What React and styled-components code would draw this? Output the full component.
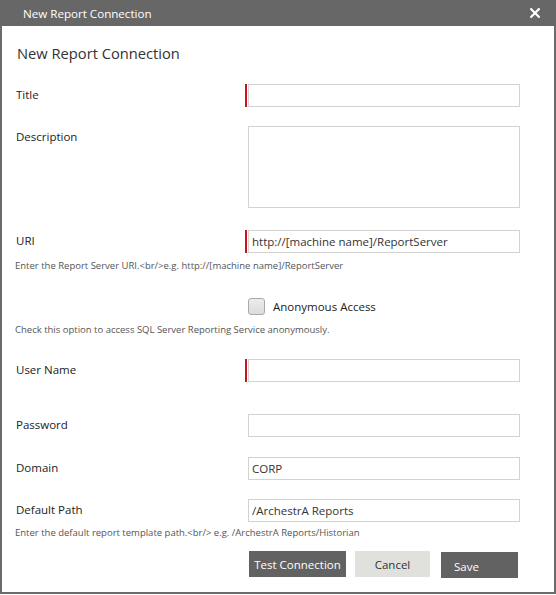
import React from "react";
import styled, { createGlobalStyle } from "styled-components";

const GlobalStyle = createGlobalStyle`
  body {
    margin: 0;
    background: #fff;
    font-family: "Open Sans", "Noto Sans", sans-serif;
  }
`;

const Window = styled.div`
  width: 556px;
  height: 594px;
  display: flex;
  flex-direction: column;
  background: #fff;
`;

const TitleBar = styled.div`
  height: 26px;
  flex-shrink: 0;
  background: #676767;
  color: #fff;
  font-size: 11.6px;
  display: flex;
  align-items: center;
  justify-content: space-between;
  padding: 0 16px 0 23px;
`;

const CloseButton = styled.button`
  border: none;
  background: none;
  padding: 0;
  width: 10px;
  height: 10px;
  display: flex;
  align-items: center;
  justify-content: center;
  cursor: pointer;
`;

const Body = styled.div`
  flex: 1;
  border: 2px solid #6b6b6b;
  border-top: none;
  padding: 0 0 0 14px;
  display: flex;
  flex-direction: column;
`;

const Heading = styled.h1`
  margin: 16px 0 0 1px;
  font-size: 14.7px;
  font-weight: 400;
  line-height: 22px;
  color: #333;
`;

const Row = styled.div`
  display: flex;
  align-items: flex-start;
  margin-top: ${(p) => p.$top || 0}px;
`;

const Label = styled.label`
  width: 232px;
  flex-shrink: 0;
  font-size: 11.5px;
  line-height: 22px;
  color: #222;
`;

const Input = styled.input`
  width: 272px;
  height: 23px;
  box-sizing: border-box;
  border: 1px solid #d2d2d2;
  padding: 0 3px;
  font-family: inherit;
  font-size: 11.5px;
  color: #333;
  outline: none;
  box-shadow: ${(p) =>
    p.$required ? "-1px 0 0 0 #fff, -3px 0 0 0 #c4151c" : "none"};
`;

const TextArea = styled.textarea`
  width: 272px;
  height: 82px;
  box-sizing: border-box;
  border: 1px solid #d2d2d2;
  resize: none;
  font-family: inherit;
  outline: none;
`;

const Hint = styled.div`
  margin: ${(p) => p.$top || 0}px 0 0 -1px;
  font-size: 9.5px;
  line-height: 14px;
  color: #555;
`;

const CheckRow = styled.label`
  display: flex;
  align-items: center;
  gap: 8px;
  margin: ${(p) => p.$top || 0}px 0 0 232px;
  font-size: 11.5px;
  color: #222;
`;

const CheckBox = styled.span`
  width: 15px;
  height: 15px;
  border: 1px solid #a9a9a9;
  border-radius: 3px;
  background: linear-gradient(#ececec, #dcdcdc);
`;

const Actions = styled.div`
  display: flex;
  margin: 11px 0 0 233px;
  gap: 9px;
`;

const Button = styled.button`
  height: 26px;
  width: ${(p) => p.$w}px;
  border: none;
  padding: ${(p) => (p.$left ? "2px 0 0 13px" : "0")};
  text-align: ${(p) => (p.$left ? "left" : "center")};
  margin-left: ${(p) => p.$gap || 0}px;
  margin-top: ${(p) => p.$drop || 0}px;
  font-family: inherit;
  font-size: 11.5px;
  background: ${(p) => (p.$light ? "#e0e0dc" : "#626262")};
  color: ${(p) => (p.$light ? "#333" : "#fff")};
  cursor: pointer;
`;

export default function App() {
  return (
    <>
      <GlobalStyle />
      <Window>
        <TitleBar>
          <span>New Report Connection</span>
          <CloseButton aria-label="Close">
            <svg width="10" height="10" viewBox="0 0 10 10">
              <path
                d="M1.2 1.2 L8.8 8.8 M8.8 1.2 L1.2 8.8"
                stroke="#fff"
                strokeWidth="2.2"
                strokeLinecap="square"
              />
            </svg>
          </CloseButton>
        </TitleBar>
        <Body>
          <Heading>New Report Connection</Heading>

          <Row $top={20}>
            <Label>Title</Label>
            <Input $required />
          </Row>

          <Row $top={19}>
            <Label>Description</Label>
            <TextArea />
          </Row>

          <Row $top={22}>
            <Label>URI</Label>
            <Input $required defaultValue="http://[machine name]/ReportServer" />
          </Row>
          <Hint $top={6}>
            Enter the Report Server URI.&lt;br/&gt;e.g. http://[machine name]/ReportServer
          </Hint>

          <CheckRow $top={25}>
            <CheckBox />
            Anonymous Access
          </CheckRow>
          <Hint $top={8}>
            Check this option to access SQL Server Reporting Service anonymously.
          </Hint>

          <Row $top={22}>
            <Label>User Name</Label>
            <Input $required />
          </Row>

          <Row $top={32}>
            <Label>Password</Label>
            <Input type="password" />
          </Row>

          <Row $top={20}>
            <Label>Domain</Label>
            <Input defaultValue="CORP" />
          </Row>

          <Row $top={19}>
            <Label>Default Path</Label>
            <Input defaultValue="/ArchestrA Reports" />
          </Row>
          <Hint $top={4}>
            Enter the default report template path.&lt;br/&gt; e.g. /ArchestrA Reports/Historian
          </Hint>

          <Actions>
            <Button $w={97}>Test Connection</Button>
            <Button $w={75} $light>
              Cancel
            </Button>
            <Button $w={77} $gap={2} $drop={1} $left>
              Save
            </Button>
          </Actions>
        </Body>
      </Window>
    </>
  );
}
